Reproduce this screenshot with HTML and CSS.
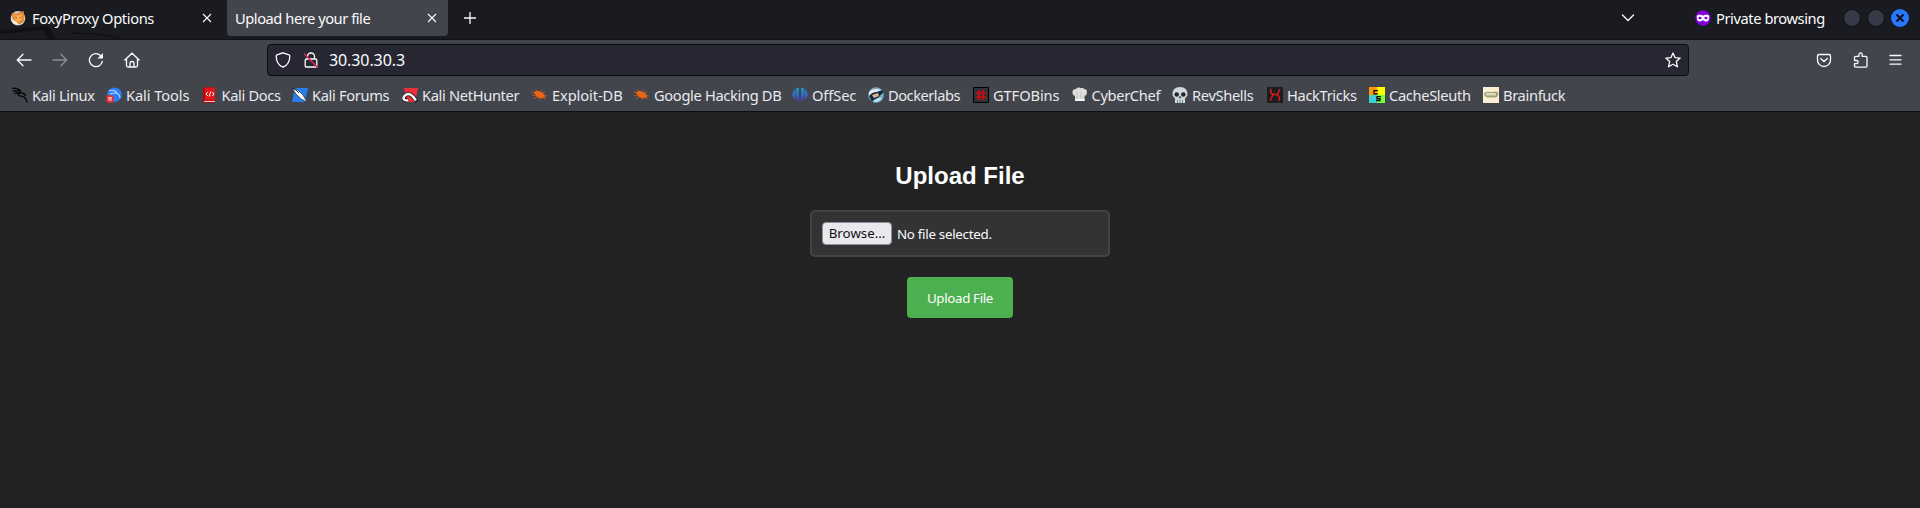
FILE: index.html
```html
<!DOCTYPE html>
<html lang="en">
<head>
<meta charset="utf-8">
<title>Upload here your file</title>
<link rel="stylesheet" href="styles.css">
</head>
<body>
<header class="chrome">
  <div class="tabs">
    <svg class="watermark" width="130" height="13" viewBox="0 27 130 13"><path d="M0 31L48 27L56 40H0z" fill="#101115"/><path d="M0 35l43-4 4 9H0z" fill="#1a1b20"/><path d="M71 34q30 0 52 6" fill="none" stroke="#111216" stroke-width="1.300"/></svg>
    <div class="tab tab-idle">
      <svg class="favicon" width="16" height="16" viewBox="0 0 16 16"><circle cx="8" cy="8.300" r="7.300" fill="#cfccc8"/><path d="M1.500 3l5 .5L13.500 1l1 6-1 5-5 2.500-5-3z" fill="#e58a35"/><path d="M4 5l4 .5 4-1.500-.5 5.500L8 12 5 9.500z" fill="#ffad50"/><path d="M.8 9q2 5.500 8 6l-2.500-3.500z" fill="#f5f0e8"/><path d="M5 7l2 1M11 6.500L9.500 8" stroke="#9a5217" fill="none"/></svg>
      <span class="tab-title">FoxyProxy Options</span>
      <svg class="tab-close" width="10" height="10" viewBox="0 0 10 10"><path d="M1 1l8 8M9 1L1 9"/></svg>
    </div>
    <div class="tab tab-active">
      <span class="tab-title tab-title-current">Upload here your file</span>
      <svg class="tab-close" width="10" height="10" viewBox="0 0 10 10"><path d="M1 1l8 8M9 1L1 9"/></svg>
    </div>
    <svg class="new-tab line" width="12" height="12" viewBox="0 0 12 12"><path d="M6 .5v11M.5 6h11"/></svg>
    <svg class="list-tabs line" width="14" height="8" viewBox="0 0 14 8"><path d="M1.500 1L7 6.500 12.500 1"/></svg>
    <svg class="mask" width="16" height="16" viewBox="0 0 16 16"><circle cx="8" cy="8" r="7.700" fill="#8000d7"/><path d="M8 5.700C6.500 4.500 2.500 4 1.800 6c-.3 3.500.7 5.500 3.200 5.500 1.500 0 2-1.300 3-1.300s1.500 1.300 3 1.300c2.500 0 3.500-2 3.200-5.500-.7-2-4.700-1.500-6.200-.3z" fill="#fff"/><ellipse cx="5" cy="8" rx="1.600" ry="1.200" fill="#8000d7"/><ellipse cx="11" cy="8" rx="1.600" ry="1.200" fill="#8000d7"/></svg>
    <span class="private">Private browsing</span>
    <i class="win"></i><i class="win"></i>
    <i class="win win-close"><svg width="10" height="10" viewBox="0 0 10 10"><path d="M1.500 1.500l7 7M8.500 1.500l-7 7" stroke="#10131c" stroke-width="2.200"/></svg></i>
  </div>

  <div class="toolbar">
    <div class="nav">
      <svg class="line" width="16" height="16" viewBox="0 0 16 16"><path d="M15 8H1.500M7 2.300L1.300 8 7 13.700"/></svg>
      <svg class="line dim" width="16" height="16" viewBox="0 0 16 16"><path d="M1 8h13.500M9 2.300L14.700 8 9 13.700"/></svg>
      <svg class="line" width="16" height="16" viewBox="0 0 16 16"><path d="M14.300 9.300A6.500 6.500 0 1 1 12.500 3.500L14 5"/><path d="M15 1v5.500H9.500z" fill="#fbfbfe" stroke="none"/></svg>
      <svg class="line" width="16" height="16" viewBox="0 0 16 16"><path d="M.8 8L8 1.200 15.200 8M2.500 6.800v6.700q0 1.500 1.500 1.500h8q1.500 0 1.500-1.500V6.800M6 15v-4q0-1.500 2-1.500t2 1.500v4"/></svg>
    </div>
    <div class="urlbar">
      <svg class="line" width="16" height="16" viewBox="0 0 16 16"><path d="M8 .8l6 2q.8.300.8 1.200c0 5-1.500 9-6.800 11.200C2.700 13 1.200 9 1.200 4q0-.9.8-1.200z"/></svg>
      <svg class="line lock" width="16" height="16" viewBox="0 0 16 16"><path d="M4.500 7V4.500a3.500 3.500 0 0 1 7 0V7M3.500 7h9q1.300 0 1.300 1.300v5.400q0 1.300-1.300 1.300h-9q-1.300 0-1.300-1.300V8.300Q2.200 7 3.500 7z"/><path d="M1.300 2l13.200 13.200" stroke="#e22850" stroke-width="1.500"/></svg>
      <span class="address">30.30.30.3</span>
      <svg class="line" width="16" height="16" viewBox="0 0 16 16"><path d="M8 1l2 4.600 5.200.5-3.900 3.500 1.200 5.200L8 12.200l-4.500 2.600 1.200-5.200L.8 6.100 6 5.600z" stroke-linejoin="round"/></svg>
    </div>
    <div class="tools">
      <svg class="line" width="16" height="16" viewBox="0 0 16 16"><path d="M3 2.500h10q1.500 0 1.500 1.500v4a6.500 6.500 0 0 1-13 0V4q0-1.500 1.500-1.500zM4.700 6.500L8 9.500l3.300-3"/></svg>
      <svg class="line" width="16" height="16" viewBox="0 0 16 16"><path d="M1.500 5.500q0-1.200 1.200-1.200H6V2.500a1.600 1.600 0 0 1 3.200 0v1.800h3.600q1.200 0 1.200 1.200V14q0 1.200-1.200 1.200H2.700q-1.200 0-1.200-1.200v-2.300h2a1.600 1.600 0 0 0 0-3.200h-2z" stroke-linejoin="round"/></svg>
      <svg class="line" width="14" height="16" viewBox="0 0 14 16"><path d="M1 3.500h11M1 7.800h11M1 12.200h11"/></svg>
    </div>
  </div>

  <nav class="bookmarks">
    <a><svg width="16" height="16" viewBox="0 0 16 16"><path d="M0 1.500q6-1 9 3M1 4.500q4-1.500 8 0M2.500 7q3-2 7-1 3 0 4.500 3M9 5q-5 2-1 4 6 0 7 6.500" fill="none" stroke="#08090b" stroke-width="1.500"/></svg>Kali Linux</a>
    <a class="wide"><svg width="16" height="16" viewBox="0 0 16 16"><circle cx="8.500" cy="7.700" r="7.300" fill="#2c7df5"/><path d="M3 4q4-2 8 1.500M4 7q5-2 8 0 2 1 2 4" fill="none" stroke="#b9d7ff" stroke-width="1.100"/><circle cx="4" cy="12" r="3.900" fill="#e52c35"/><path d="M2 10.700h4M3.200 11v3M5 11v3" stroke="#fff" stroke-width=".8"/></svg>Kali Tools</a>
    <a><svg width="16" height="16" viewBox="0 0 16 16"><path d="M1 .5h12V16H1z" fill="#a90a0e"/><path d="M3 .5h10v13H3z" fill="#e41419"/><path d="M2 14h11v1H2z" fill="#e8cccc"/><path d="M5.700 5L4 7l1.700 2M10.300 5L12 7l-1.700 2M8.600 4.500l-1.200 5" fill="none" stroke="#fff"/></svg>Kali Docs</a>
    <a><svg width="16" height="16" viewBox="0 0 16 16"><path d="M0 15L3 1h13l-3 14z" fill="#267ef1"/><path d="M0 1l6 2 5 5 4 7-6-3-5-5z" fill="#fff" stroke="#15263f" stroke-width=".7"/><path d="M0 1l4 2 3 3" stroke="#15263f" fill="none"/></svg>Kali Forums</a>
    <a><svg width="16" height="16" viewBox="0 0 16 16"><path d="M2 1h14l-3 14H5z" fill="#ee2e38"/><path d="M6 13.500q-6 0-4-4 4-5 9 0l4 5" fill="none" stroke="#14161b" stroke-width="4"/><path d="M6 13.500q-6 0-4-4 4-5 9 0l3 4" fill="none" stroke="#fff" stroke-width="2.400"/></svg>Kali NetHunter</a>
    <a class="wide"><svg width="16" height="16" viewBox="0 0 16 16"><use href="#bug"/></svg>Exploit-DB</a>
    <a><svg width="16" height="16" viewBox="0 0 16 16"><g id="bug"><path d="M2 5.500Q5 3 9 5l3.500 2.500q1 3-1.500 3.500-4 1-7-2z" fill="#ed6416"/><path d="M4 6L0 5M5 5L4 2.500M8 4.500l2-2M10 6l3-1M12 9h3M11 10.500l3 1.500M8 11v2M5 10l-3 1.500M3 8L0 9" stroke="#ed6416" stroke-width=".7"/></g></svg>Google Hacking DB</a>
    <a class="wide"><svg width="16" height="16" viewBox="0 0 16 16"><defs><linearGradient id="off" gradientUnits="userSpaceOnUse" x1="0" y1="0" x2="0" y2="16"><stop stop-color="#18aac7"/><stop offset=".55" stop-color="#3568db"/><stop offset="1" stop-color="#6b20bd"/></linearGradient></defs><path d="M3.300 2v11Q-2.500 8 3.300 2zM4.200 1.300L6.800.5V15.500Q4.200 12 4.200 8zM11.800 1.300L9.200.5V15.500Q11.800 12 11.800 8zM12.700 2v11q5.800-5 0-11z" fill="url(#off)"/></svg>OffSec</a>
    <a class="narrow"><svg width="16" height="16" viewBox="0 0 16 16"><circle cx="8" cy="8" r="7.800" fill="#78acc5"/><path d="M1 5q5-5 12-2l-7 3-5 3z" fill="#e8eef0"/><path d="M1 9q3-4 8-4l6-2v3q-3 2-5 5-4 1-6 4z" fill="#152b46"/><path d="M4 8l6-2 1 3-5 2z" fill="#e4b280"/><path d="M5 14l5-3 4 0q-3 4-7 4z" fill="#bde3ed"/></svg>Dockerlabs</a>
    <a class="wide"><svg width="16" height="16" viewBox="0 0 16 16"><path d="M.5.500h15v15H.5z" fill="#303238" stroke="#000"/><path d="M6 3v10M10 3v10M3 6h10M3 10h10" stroke="#cf0b10" stroke-width="1.700"/></svg>GTFOBins</a>
    <a><svg width="16" height="16" viewBox="0 0 16 16"><path d="M3 14V9Q0 8 .5 4.500 1 2 4 2q2-2.500 5-.8 2-1 3 .8 3 0 3 3 0 3-2.500 4v5z" fill="#deddda"/><path d="M5 5v7M9 5v7" stroke="#c4c3c1"/><path d="M3 12h9.500v2H3z" fill="#f5f5f3"/></svg>CyberChef</a>
    <a><svg width="16" height="16" viewBox="0 0 16 16"><path d="M8 0c5 0 7.500 3 7.500 7 0 2-1 3.500-2.500 4.200V16H3v-4.800C1.500 10.500.5 9 .5 7 .5 3 3 0 8 0z" fill="#cfdae0"/><circle cx="4.700" cy="7.500" r="2.300" fill="#24272d"/><circle cx="11.300" cy="7.500" r="2.300" fill="#24272d"/><path d="M8 9l-1 2h2zM5.500 13v3M8 13v3M10.500 13v3" fill="#24272d" stroke="#555d64" stroke-width=".7"/></svg>RevShells</a>
    <a><svg width="16" height="16" viewBox="0 0 16 16"><path d="M0 0h16v16H0z" fill="#1b1d20"/><path d="M4 2q-1 3 1 5 1 1 0 3l-2 4M13 2l-2 4q-1 2 1 4 1 2 0 4M5 7l6 1" fill="none" stroke="#e81717" stroke-width="1.500"/></svg>HackTricks</a>
    <a><svg width="16" height="16" viewBox="0 0 16 16"><path d="M0 0h8v8H0z" fill="#ff9d00"/><path d="M8 0h8v8H8z" fill="#ffff00"/><path d="M0 8h8v8H0z" fill="#3fd0d4"/><path d="M8 8h8v8H8z" fill="#78ff3b"/><path d="M9 3.700H5v3.100h4M12 9.700H8v1.900h3V13.500H7" fill="none" stroke="#080808" stroke-width="1.300"/></svg>CacheSleuth</a>
    <a><svg width="16" height="16" viewBox="0 0 16 16"><path d="M0 0h16v16H0z" fill="#faeed5"/><path d="M1 6q3-2 7-1 5-1 7 0 1 4-2 5.500H4Q1 9.500 1 6z" fill="#a3a478"/><path d="M3 6h10v2.500H3z" fill="#dad8b8"/></svg>Brainfuck</a>
  </nav>
</header>

<main class="page">
  <h2 class="heading">Upload File</h2>
  <div class="file-input"><span class="browse">Browse…</span><span>No file selected.</span></div>
  <button class="submit">Upload File</button>
</main>
</body>
</html>
```
FILE: styles.css
```css
* { box-sizing: border-box; }
body {
  margin: 0;
  height: 508px;
  overflow: hidden;
  background: #222;
  color: #fbfbfe;
  font: 14.67px/20px "Noto Sans", sans-serif;
}
svg { flex: none; display: block; }
.chrome { height: 112px; background: #43454c; border-bottom: 1px solid #0d0e11; white-space: nowrap; }
.line { fill: none; stroke: #fbfbfe; stroke-width: 1.3; stroke-linecap: round; }
.dim { opacity: .4; }

.tabs {
  position: relative;
  display: flex;
  align-items: center;
  height: 40px;
  padding: 0 7px 4px 0;
  background: #1a1b20;
  border-bottom: 1px solid #121318;
}
.watermark { position: absolute; left: 0; bottom: 0; }
.tab { position: relative; display: flex; align-items: center; height: 36px; }
.tab-idle { width: 227px; padding: 0 15px 0 10px; }
.tab-active { width: 221px; padding: 0 11px 0 8px; background: #43454c; border-radius: 0 0 4px 4px; }
.favicon { margin-right: 6px; }
.tab-title { flex: 1; letter-spacing: -.36px; }
.tab-title-current { letter-spacing: -.45px; }
.tab-close { fill: none; stroke: #fbfbfe; stroke-width: 1.1; }
.new-tab { margin-left: 16px; }
.list-tabs { margin-left: auto; margin-right: 60px; }
.mask { margin-right: 5px; }
.private { width: 127px; letter-spacing: -.42px; }
.win {
  display: flex;
  align-items: center;
  justify-content: center;
  width: 18px;
  height: 18px;
  margin-right: 6px;
  border: 1px solid #0d0f14;
  border-radius: 50%;
  background: #353a46;
}
.win-close { margin-right: 4px; border: 0; background: #2777ff; }

.toolbar { display: flex; align-items: center; height: 40px; }
.nav { display: flex; gap: 20px; width: 267px; padding-left: 16px; }
.urlbar {
  display: flex;
  align-items: center;
  width: 1422px;
  height: 32px;
  padding: 0 7px;
  background: #262733;
  border: 1px solid #0c0c10;
  border-radius: 4px;
}
.lock { margin: 0 10px 0 12px; }
.address { flex: 1; font-size: 16px; letter-spacing: -.1px; }
.tools { display: flex; gap: 20.5px; padding-left: 127px; }

.bookmarks {
  display: grid;
  grid-template-columns: 94px 95.5px 90.5px 110px 130px 102px 158px 76px 105px 98.5px 100.5px 95px 102px 114px 100px;
  align-items: center;
  height: 30px;
  padding-left: 12px;
}
.bookmarks a { display: flex; align-items: center; gap: 4px; color: #e9e9ee; letter-spacing: -.34px; }
.bookmarks .wide { letter-spacing: -.1px; }
.bookmarks .narrow { letter-spacing: -.48px; }

.page { display: flex; flex-direction: column; align-items: center; padding-top: 48px; }
.heading { margin: 0 0 18px; font: bold 24px/32px "Liberation Sans", sans-serif; color: #fff; }
.file-input {
  display: flex;
  align-items: center;
  gap: 5px;
  width: 300px;
  height: 47px;
  padding: 0 10px;
  background: #333;
  border: 2px solid #444;
  border-radius: 5px;
  font-size: 13.33px;
  letter-spacing: -.28px;
}
.browse {
  width: 70px;
  height: 23px;
  border: 1px solid #8f8f9d;
  border-radius: 4px;
  background: #e9e9ed;
  color: #111;
  line-height: 21px;
  letter-spacing: 0;
  text-align: center;
}
.submit {
  width: 106px;
  height: 41px;
  margin-top: 20px;
  padding: 0;
  border: 0;
  border-radius: 4px;
  background: #4caf50;
  color: #fff;
  font: 13.33px "Noto Sans", sans-serif;
  letter-spacing: -.35px;
}
```
